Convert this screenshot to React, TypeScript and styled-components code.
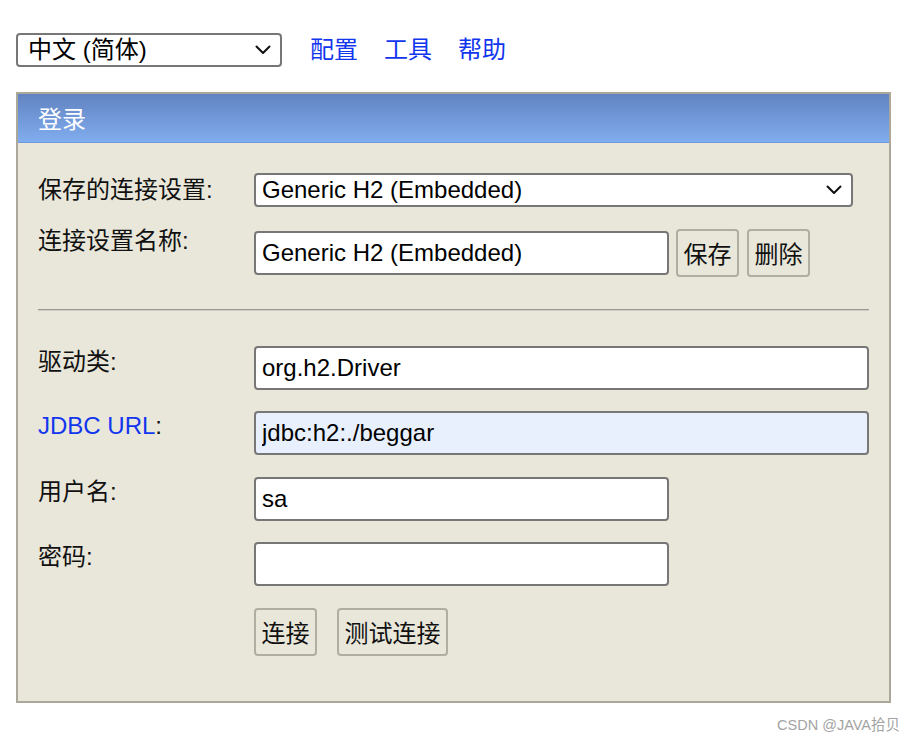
import React from "react";
import styled, { createGlobalStyle } from "styled-components";

const GlobalStyle = createGlobalStyle`
  html, body { margin: 0; padding: 0; background: #ffffff; }
  body {
    font-family: "Liberation Sans", Arial, "Noto Sans CJK SC", sans-serif;
    font-size: 24px;
    color: #111;
  }
  * { box-sizing: border-box; }
`;

const Page = styled.div`
  position: relative;
  min-height: 742px;
  padding: 33px 0 0 16px;
`;

const TopBar = styled.div`
  display: flex;
  align-items: center;
  height: 34px;
`;

const SelectBox = styled.div<{ $width: number; $pad: number }>`
  display: flex;
  align-items: center;
  justify-content: space-between;
  width: ${(p) => p.$width}px;
  height: 34px;
  padding: 0 9px 0 ${(p) => p.$pad}px;
  border: 2px solid #777;
  border-radius: 4px;
  background: #fff;
  font-size: 24px;
  color: #000;
  white-space: nowrap;
`;

const SelectText = styled.span`
  line-height: 28px;
`;

const NavLinks = styled.nav`
  display: flex;
  align-items: center;
  gap: 26px;
  margin-left: 28px;
`;

const NavLink = styled.a`
  color: #1236ee;
  text-decoration: none;
  font-size: 24px;
  line-height: 28px;
`;

const Panel = styled.div`
  margin-top: 25px;
  width: 875px;
  border: 2px solid #aca899;
  background: #e9e7da;
`;

const PanelHeader = styled.div`
  height: 49px;
  display: flex;
  align-items: center;
  padding: 0 0 2px 20px;
  background: linear-gradient(to bottom, #6283c1 0%, #80adee 100%);
  border-bottom: 1px solid #6f9bd9;
  color: #fff;
  font-size: 24px;
`;

const PanelBody = styled.div`
  padding: 30px 21px 45px 20px;
`;

const Form = styled.div`
  display: grid;
  grid-template-columns: 216px 1fr;
  row-gap: 21.5px;
  align-items: center;
`;

const Label = styled.div<{ $offset: number }>`
  align-self: start;
  margin-top: ${(p) => p.$offset}px;
  line-height: 28px;
  font-size: 24px;
  color: #111;
  white-space: nowrap;
`;

const LinkLabel = styled.span`
  color: #1236ee;
`;

const Field = styled.div`
  display: flex;
  align-items: center;
`;

const TextInput = styled.input<{ $width: number; $tint?: boolean }>`
  width: ${(p) => p.$width}px;
  height: 44px;
  padding: 0 6px;
  border: 2px solid #777;
  border-radius: 4px;
  background: ${(p) => (p.$tint ? "#e8f0fe" : "#ffffff")};
  font-family: "Liberation Sans", Arial, "Noto Sans CJK SC", sans-serif;
  font-size: 24px;
  color: #000;
  outline: none;
`;

const Button = styled.button<{ $gap: number }>`
  margin-left: ${(p) => p.$gap}px;
  height: 48px;
  padding: 0 5.5px;
  border: 2px solid #b0ae9f;
  border-radius: 4px;
  background: #e9e7da;
  font-family: "Liberation Sans", Arial, "Noto Sans CJK SC", sans-serif;
  font-size: 24px;
  color: #111;
`;

const Separator = styled.div`
  grid-column: 1 / -1;
  height: 2px;
  margin: 11px 0 13px;
  border-top: 1px solid #9a9a9a;
  border-bottom: 1px solid #cfcdc2;
`;

const Spacer = styled.div``;

const Watermark = styled.div`
  position: absolute;
  right: 16px;
  top: 713px;
  font-size: 14.5px;
  color: #a3a3a3;
`;

const Chevron: React.FC = () => (
  <svg width="16" height="10" viewBox="0 0 16 10" fill="none">
    <path d="M1.5 1.5 L8 8 L14.5 1.5" stroke="#111" strokeWidth="2" strokeLinecap="round" strokeLinejoin="round" />
  </svg>
);

export default function App() {
  return (
    <>
      <GlobalStyle />
      <Page>
        <TopBar>
          <SelectBox $width={266} $pad={10}>
            <SelectText>中文 (简体)</SelectText>
            <Chevron />
          </SelectBox>
          <NavLinks>
            <NavLink href="#">配置</NavLink>
            <NavLink href="#">工具</NavLink>
            <NavLink href="#">帮助</NavLink>
          </NavLinks>
        </TopBar>

        <Panel>
          <PanelHeader>登录</PanelHeader>
          <PanelBody>
            <Form>
              <Label $offset={3}>保存的连接设置:</Label>
              <Field>
                <SelectBox $width={599} $pad={6}>
                  <SelectText>Generic H2 (Embedded)</SelectText>
                  <Chevron />
                </SelectBox>
              </Field>

              <Label $offset={-2}>连接设置名称:</Label>
              <Field>
                <TextInput $width={415} defaultValue="Generic H2 (Embedded)" />
                <Button $gap={7}>保存</Button>
                <Button $gap={8}>删除</Button>
              </Field>

              <Separator />

              <Label $offset={2}>驱动类:</Label>
              <Field>
                <TextInput $width={615} defaultValue="org.h2.Driver" />
              </Field>

              <Label $offset={1}>
                <LinkLabel>JDBC URL</LinkLabel>:
              </Label>
              <Field>
                <TextInput $width={615} $tint defaultValue="jdbc:h2:./beggar" />
              </Field>

              <Label $offset={1}>用户名:</Label>
              <Field>
                <TextInput $width={415} defaultValue="sa" />
              </Field>

              <Label $offset={1}>密码:</Label>
              <Field>
                <TextInput $width={415} type="password" defaultValue="" />
              </Field>

              <Spacer />
              <Field>
                <Button $gap={0}>连接</Button>
                <Button $gap={20}>测试连接</Button>
              </Field>
            </Form>
          </PanelBody>
        </Panel>
        <Watermark>CSDN @JAVA拾贝</Watermark>
      </Page>
    </>
  );
}
